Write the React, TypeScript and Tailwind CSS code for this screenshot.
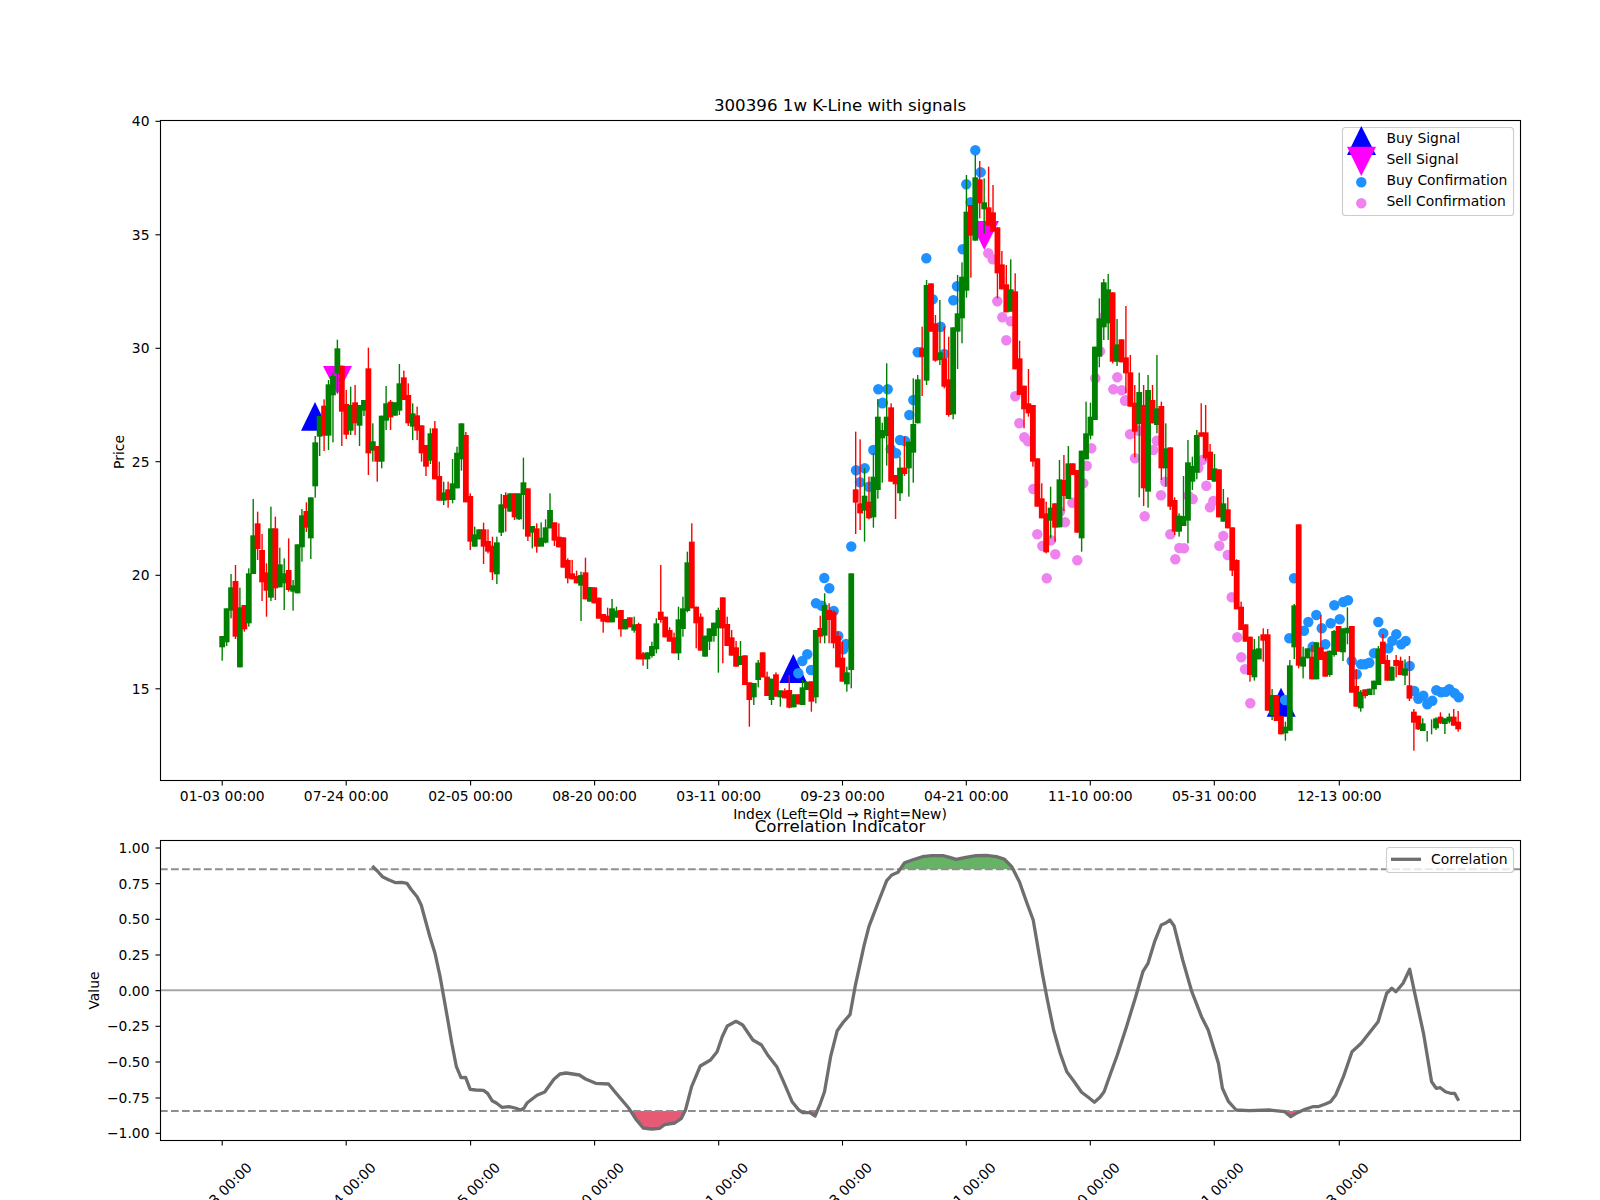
import React from "react";

type C = [string, number, number, number, number];

const X0 = 222.2;
const STEP = 4.43;

// Candles are read per crop: y = y0 + value / 3
const seg1: C[] = [
  ["g",888,888,922,962],["g",805,805,907,918],["g",702,742,812,835],["r",675,723,890,897],["g",743,802,982,982],
  ["r",795,795,868,875],["g",685,700,850,860],["g",477,586,702,702],["r",515,550,627,660],["r",582,630,727,783],
  ["r",670,697,752,830],["g",500,565,773,783],["r",530,565,745,780],["g",623,673,742,742],["g",655,700,730,810],
  ["r",595,690,750,755],["g",720,736,755,812],["g",613,613,760,760],["g",507,526,622,665],["r",487,513,563,576],
  ["g",472,472,595,657],["g",288,307,439,473],["g",228,228,290,348],["r",178,197,287,333],["g",120,133,287,330],
  ["g",100,108,166,307],["g",-1,25,100,160],["r",77,77,215,318],["r",150,192,284,297],["g",140,195,272,285],
  ["r",135,187,250,285],["g",195,195,257,318],["g",180,180,212,228],["r",23,85,340,405],["g",250,304,332,365],
  ["r",318,318,365,425],["g",227,227,365,385],["g",138,190,242,270],["r",180,185,232,270],["g",187,187,227,227],
  ["g",72,130,212,225],["r",92,112,180,180],["r",130,165,250,258],["g",190,220,260,300],["r",200,226,272,300],
  ["r",256,256,340,365],["r",315,315,380,408],["g",265,280,362,372],["r",243,265,418,418],["r",365,408,482,482],
  ["g",425,457,482,495],["r",425,448,480,503],["g",357,430,480,490],["g",320,338,445,445],["g",250,250,358,392],
  ["r",276,285,487,487],["r",460,468,605,630],["g",560,583,620,620],["g",568,568,598,598],["r",548,568,620,672],
  ["r",568,603,635,640],["r",590,617,697,720],["g",590,607,703,732],["g",462,493,578,588],["r",457,465,505,575],
  ["g",460,460,515,515],["r",460,460,532,540],["g",460,460,538,540],["g",353,427,465,568],["r",445,445,590,603],
];
const seg2: C[] = [
  ["g",258,258,278,325],["r",250,265,320,338],["g",247,293,320,318],["g",238,262,308,310],["g",160,210,265,265],
  ["r",247,247,302,318],["r",250,290,322,322],["r",292,292,383,383],["r",355,360,415,430],["r",360,400,418,418],
  ["r",392,408,430,430],["g",395,405,437,543],["r",353,397,478,478],["g",441,441,485,485],["r",442,442,490,490],
  ["r",473,473,536,536],["r",522,522,545,578],["r",503,527,547,547],["g",477,505,547,547],["g",500,512,533,533],
  ["r",510,510,568,590],["g",537,537,568,568],["r",532,532,562,562],["g",530,553,572,578],["r",548,552,658,658],
  ["r",636,640,658,677],["g",637,637,658,687],["g",605,618,648,653],["g",535,550,628,640],["r",375,515,540,548],
  ["r",530,530,592,592],["r",562,570,605,605],["r",578,592,640,640],["g",500,538,640,660],["g",470,505,567,590],
  ["g",335,367,513,517],["r",250,305,505,505],["r",500,500,550,625],["r",520,530,632,632],["g",587,587,650,650],
  ["g",565,565,605,630],["g",548,548,588,605],["g",503,510,565,698],["r",472,472,565,670],["r",530,552,618,618],
  ["r",570,592,647,647],["r",603,622,680,680],["g",603,648,675,675],["r",646,646,735,735],["r",727,727,780,860],
  ["g",729,729,772,795],["g",660,668,720,742],["r",637,637,712,712],["r",695,710,768,768],["g",716,716,780,795],
  ["r",697,703,770,770],["g",751,751,772,800],["r",745,752,775,775],["r",705,750,803,805],["g",763,763,802,802],
  ["r",763,763,793,793],["g",720,742,795,795],["g",725,725,750,750],["r",724,724,785,815],["g",570,570,772,790],
  ["r",527,564,590,610],["g",460,495,587,610],["r",490,510,540,610],["r",510,515,610,625],["r",575,588,682,682],
  ["r",605,653,725,725],["g",680,697,733,755],["g",400,400,690,745],
];
// all in the crop whose y0 is 400
const seg3: C[] = [
  ["r",95,268,308,402],["r",118,310,340,390],["g",205,287,332,425],["r",230,305,355,358],["g",160,230,352,383],
  ["g",-3,50,270,296],["g",68,90,115,248],["g",-110,50,108,197],["r",10,22,245,245],["r",225,225,253,357],
  ["g",170,203,280,303],["r",110,203,222,228],["g",125,125,205,290],["g",-65,72,158,248],["g",-75,-62,70,70],
  ["r",-220,-155,-130,-12],["g",-360,-345,-58,-45],["r",-350,-350,-205,-205],["r",-255,-230,-118,-115],["g",-300,-143,-120,-105],
  ["r",-220,-125,-40,-35],["r",-190,-62,45,50],["g",-218,-218,43,58],["g",-375,-260,-205,-93],["g",-413,-370,-245,-170],
  ["g",-675,-565,-328,-307],["r",-585,-585,-493,-367],["g",-735,-668,-478,-478],["r",-717,-662,-590,-545],["g",-665,-593,-572,-500],
  ["r",-700,-578,-523,-523],["r",-645,-563,-505,-505],["r",-518,-518,-380,-305],["r",-447,-407,-332,-332],["r",-405,-347,-263,-263],
  ["g",-422,-332,-265,-265],["r",-380,-326,-92,-92],["r",-178,-125,-15,-15],["r",-43,-43,28,85],["r",-93,10,40,50],["r",15,15,185,200],
  ["r",175,175,320,320],["r",250,295,355,355],["r",305,340,457,460],["g",260,323,362,415],["r",310,310,383,425],
  ["g",180,238,382,382],["r",165,240,288,333],["g",138,190,297,297],["r",190,190,225,225],["r",210,210,398,398],
  ["g",152,152,415,455],["g",5,100,178,178],["g",8,50,107,118],["g",-160,-160,60,60],["g",-305,-245,-130,-98],
  ["g",-363,-353,-218,-180],["g",-378,-332,-230,-180],["r",-323,-323,-115,-110],["g",-243,-167,-115,-102],["r",-182,-182,-113,-113],
  ["r",-282,-128,-80,-20],["r",-135,-83,20,20],["r",-45,8,95,172],["g",-82,-24,72,292],["r",-45,15,265,318],
  ["g",-75,-30,275,323],["r",-45,0,70,70],["g",-135,25,75,100],["r",5,18,205,240],["g",70,145,205,260],
  ["r",142,142,320,330],["r",292,300,395,405],["g",340,347,395,410],["g",228,348,378,378],["g",120,187,362,430],
  ["g",170,198,245,270],["g",90,105,218,238],["r",10,97,110,110],["r",15,97,175,182],["r",132,155,240,240],
  ["g",162,205,245,245],["r",208,208,352,352],["g",267,310,365,365],["r",292,328,385,385],["r",382,382,512,528],
  ["r",478,480,628,628],["r",605,620,690,690],["r",673,673,725,725],["r",710,710,825,845],["g",717,748,832,842],
  ["g",708,745,778,778],["r",685,703,722,785],["r",687,703,932,932],["g",867,885,945,960],["r",885,885,963,963],
  ["r",948,948,1003,1003],["g",965,980,1000,1022],["g",780,796,992,992],["g",612,616,742,777],["r",373,373,797,805],
  ["g",740,770,800,835],["g",745,745,775,775],["r",735,770,838,838],["g",727,727,838,838],["r",645,742,780,780],
  ["r",755,755,830,830],["g",752,752,825,830],["g",690,693,765,770],["r",678,678,755,755],["g",685,685,757,783],
  ["g",622,683,700,733],["r",678,678,878,878],["r",808,858,920,920],["g",870,875,925,935],["r",868,868,888,895],
  ["g",866,866,885,885],["g",842,842,868,885],["g",738,745,855,855],["r",702,725,792,792],["r",765,780,842,842],
  ["g",800,800,842,842],["r",765,780,798,832],["r",770,782,825,825],["g",778,805,827,855],["r",768,856,896,903],
  ["r",927,935,968,1052],["r",947,947,988,990],["g",955,970,993,993],["g",993,1000,1000,1025],["g",958,980,980,1003],
  ["g",952,955,985,990],["r",937,950,970,972],["g",955,955,972,1002],["g",940,950,965,970],["r",927,950,977,977],
  ["r",933,965,988,995],
];

const toPx = (y0: number, list: C[]) =>
  list.map(([c, h, t, b, l]) => ({
    c: c === "g" ? "#008000" : "#ff0000",
    h: y0 + h / 3,
    t: y0 + t / 3,
    b: y0 + b / 3,
    l: y0 + l / 3,
  }));

const candles = [...toPx(340, seg1), ...toPx(440, seg2), ...toPx(400, seg3)];

const blue: number[][] = [
  [851.3,546.5],[824.3,578],[829.3,588.3],[816,603.3],[821.7,605.7],[833.7,611],[838.3,636],[846,644],[843.3,649.3],
  [807.3,654.3],[802.3,661],[798.3,673.3],[811,670],[856,470.3],[864.7,468.3],[860,482.3],[869,486.7],[873.3,450],
  [896,453.3],[890.7,449],[900,440],[905,441],[909.3,415],[913.3,400],[882.7,402.7],[878.3,389.3],[887.7,389.3],
  [882.3,403.3],[917.7,352.3],[921,352.3],[944.3,354],[932.7,299.3],[940.7,326.7],[926.3,258.3],[953.3,300.3],
  [957,286.3],[962.7,249.3],[966.3,184.3],[970.7,202.3],[975.3,150.3],[980.7,172.3],[1285,700],[1294,578.3],
  [1289.3,638.3],[1304,630.7],[1308.3,622],[1316.3,615],[1321.7,628.3],[1334.3,605.3],[1330.7,623.3],[1339.7,619.3],
  [1343.3,602],[1348,600.3],[1312.7,646.7],[1325.3,644.3],[1351.7,661],[1356.7,674.3],[1361,664.3],[1365,664.3],
  [1369.3,662.7],[1374,653.3],[1378.3,622],[1383.3,633.3],[1388.3,648.3],[1392.3,640.7],[1396.3,634.3],[1401.3,644.3],
  [1405.7,641],[1409.7,666],[1414.3,691],[1418.3,698.7],[1423.3,695.7],[1427.3,704.3],[1432.3,700.7],[1436.3,690.3],
  [1441,692.3],[1445.7,691.7],[1449.3,689.3],[1454.7,693.3],[1458.7,697.3],
];

const violet: number[][] = [
  [988.3,253.3],[992.7,259.3],[997.3,301.3],[1002.3,317.3],[1010.7,321.3],[1006.3,340.3],[1015.3,396.3],[1019.3,423.3],
  [1100,351.3],[1095.3,378.3],[1117.3,377.3],[1113.3,389.3],[1121.7,390.3],[1126,400.3],[1104,316.7],[1024.3,437.3],
  [1028,441.3],[1033.3,489],[1037.3,534.3],[1042.3,546],[1051,540.3],[1055.3,554.3],[1046.7,578.3],[1065,522.3],
  [1060,511.7],[1072.3,502.7],[1077.3,560.3],[1083.3,483.3],[1086.7,465.7],[1091.3,448.3],[1130,434.3],[1135,458.3],
  [1125,400.7],[1139,430.7],[1153.3,450],[1156.7,440.7],[1165.3,481.7],[1144.7,516.3],[1161,495.3],[1170.3,534.3],
  [1179.3,548],[1184,548.3],[1175.3,559.3],[1188.3,495.7],[1192.7,499],[1202.3,460],[1198.3,468],[1206.3,485.7],
  [1210,507.3],[1213.3,501],[1223.3,536],[1219.3,545.7],[1227.7,555],[1231.7,597.3],[1237.3,637.3],[1241.3,657.3],
  [1245,669.3],[1250.3,703.3],
];

const corrA: number[][] = [
  [612,318],[622,333],[632,350],[645,360],[658,368],[670,367],[680,370],[688,388],[700,410],[708,435],[716,480],[725,530],
  [735,580],[745,650],[752,710],[760,780],[768,850],[777,920],[786,953],[795,952],[804,988],[815,990],[830,991],[838,1000],
  [847,1022],[856,1030],[866,1042],[880,1040],[892,1044],[903,1050],[909,1045],[916,1028],[935,1006],[950,996],[968,958],
  [980,942],[992,939],[1018,945],[1030,957],[1050,970],[1075,972],[1090,1000],[1115,1045],[1130,1080],[1143,1104],[1160,1107],
  [1175,1105],[1185,1094],[1205,1089],[1218,1075],[1226,1050],[1238,980],[1255,918],[1275,900],[1288,875],[1298,830],[1308,798],
  [1325,784],[1338,795],[1358,840],[1375,855],[1387,885],[1405,920],[1418,965],[1435,1025],[1448,1050],[1456,1058],[1470,1058],
];
const corrB: number[][] = [
  [29.6,1068],[40,1030],[48,995],[60,890],[73,812],[84,788],[98,764],[108,680],[125,560],[135,500],[155,420],[170,362],[180,345],
  [192,337],[205,308],[220,300],[240,290],[258,287],[280,287],[295,293],[306,298],[325,292],[345,287],[365,286],[385,290],[400,297],
  [415,320],[430,365],[445,430],[457,480],[465,550],[475,640],[485,720],[497,810],[510,880],[523,935],[535,960],[552,997],[565,1012],
  [577,1027],[588,1012],[596,995],[610,935],[622,885],[640,800],[658,710],[672,635],[682,610],[695,545],[708,495],[716,490],[725,480],
  [733,497],[750,600],[768,695],[787,770],[800,810],[820,910],[828,985],[840,1025],[855,1050],[880,1052],[920,1050],[950,1055],
  [962,1070],[975,1058],[990,1048],[1005,1040],[1015,1040],[1030,1032],[1040,1025],[1050,1005],[1065,950],[1082,875],[1100,850],
  [1133,785],[1150,700],[1160,685],[1168,695],[1182,670],[1195,628],[1205,700],[1222,820],[1238,965],[1247,985],[1255,983],[1265,995],
  [1275,1000],[1283,1000],[1291,1022],
];
const corr = [
  ...corrA.map(([x, y]) => [60 + x / 1.96, 760 + y / 3]),
  ...corrB.map(([x, y]) => [800 + x / 1.96, 760 + y / 3]),
];
const corrLine = corr.map((p) => `${p[0].toFixed(1)},${p[1].toFixed(1)}`).join(" ");
const fillShape = (y: number) =>
  `${corr[0][0].toFixed(1)},${y} ${corrLine} ${corr[corr.length - 1][0].toFixed(1)},${y}`;

const ticks: [number, string][] = [
  [222.2, "01-03 00:00"],[346.2, "07-24 00:00"],[470.6, "02-05 00:00"],[594.6, "08-20 00:00"],[718.7, "03-11 00:00"],
  [842.5, "09-23 00:00"],[966.3, "04-21 00:00"],[1090.3, "11-10 00:00"],[1214.3, "05-31 00:00"],[1339.3, "12-13 00:00"],
];
const priceTicks: [number, string][] = [
  [121.3, "40"],[234.8, "35"],[348.3, "30"],[461.7, "25"],[575.3, "20"],[688.8, "15"],
];
const valueTicks: [number, string][] = [
  [848, "1.00"],[883.7, "0.75"],[919.3, "0.50"],[955, "0.25"],[990.7, "0.00"],[1026.3, "−0.25"],[1062, "−0.50"],[1098, "−0.75"],[1133.3, "−1.00"],
];

export default function App() {
  return (
    <div className="relative flex h-[1200px] w-[1600px] flex-col overflow-hidden bg-white font-['DejaVu_Sans',sans-serif] text-black">
      <div className="ml-[160px] h-[116px] w-[1360px] pt-[96px] text-center text-[16.67px] leading-[20px]">
        300396 1w K-Line with signals
      </div>

      <svg className="block h-[688px] w-[1600px] shrink-0 text-[13.89px]" viewBox="0 116 1600 688">
        {/* signals */}
        <polygon points="315,402 301,430.7 329,430.7" fill="#0000ff" />
        <polygon points="323,366 352,366 337.5,394.3" fill="#ff00ff" />
        <polygon points="793.3,654 779.3,683 807.3,683" fill="#0000ff" />
        <polygon points="970,221 999,221 984.3,250" fill="#ff00ff" />
        <polygon points="1281,687.7 1266.7,716.7 1295.7,716.7" fill="#0000ff" />
        {/* confirmations */}
        {blue.map(([x, y], i) => (
          <circle key={`b${i}`} cx={x} cy={y} r={5.2} fill="#1e90ff" />
        ))}
        {violet.map(([x, y], i) => (
          <circle key={`v${i}`} cx={x} cy={y} r={5.2} fill="#ee82ee" />
        ))}
        {/* candles */}
        {candles.map((k, i) => {
          const x = X0 + i * STEP;
          return (
            <g key={i} fill={k.c}>
              <rect x={x - 0.7} y={k.h} width={1.4} height={Math.max(0, k.l - k.h)} />
              {k.b > k.t && <rect x={x - 2.9} y={k.t} width={5.8} height={k.b - k.t} />}
            </g>
          );
        })}
        {/* frame and ticks */}
        <rect x={160.5} y={120.5} width={1360} height={660} fill="none" stroke="#000" strokeWidth={1.1} />
        {ticks.map(([x, label]) => (
          <g key={label}>
            <line x1={x} x2={x} y1={781} y2={785.5} stroke="#000" strokeWidth={1.1} />
            <text x={x} y={800.7} textAnchor="middle">{label}</text>
          </g>
        ))}
        {priceTicks.map(([y, label]) => (
          <g key={label}>
            <line x1={155.5} x2={160} y1={y} y2={y} stroke="#000" strokeWidth={1.1} />
            <text x={149.5} y={y + 5.1} textAnchor="end">{label}</text>
          </g>
        ))}
        <text transform="translate(124 452) rotate(-90)" textAnchor="middle">Price</text>
        {/* legend */}
        <rect x={1342.5} y={127.5} width={171} height={88} rx={3} fill="#fff" fillOpacity={0.8} stroke="#cccccc" strokeWidth={1.1} />
        <polygon points="1361.3,126 1347,155 1376,155" fill="#0000ff" />
        <polygon points="1347,146.7 1376,146.7 1361.3,176" fill="#ff00ff" />
        <circle cx={1361.3} cy={182.3} r={5.2} fill="#1e90ff" />
        <circle cx={1361.3} cy={203.3} r={5.2} fill="#ee82ee" />
        <text x={1386.5} y={143.3}>Buy Signal</text>
        <text x={1386.5} y={164.3}>Sell Signal</text>
        <text x={1386.5} y={185.3}>Buy Confirmation</text>
        <text x={1386.5} y={206.3}>Sell Confirmation</text>
      </svg>

      <div className="ml-[160px] h-[20px] w-[1360px] text-center text-[13.89px] leading-[20px]">
        Index (Left=Old → Right=New)
      </div>
      <div className="-mt-[7px] ml-[160px] h-[20px] w-[1360px] text-center text-[16.67px] leading-[20px]">
        Correlation Indicator
      </div>

      <svg className="block h-[363px] w-[1600px] shrink-0 text-[13.89px]" viewBox="0 837 1600 363">
        <defs>
          <clipPath id="below">
            <rect x={160} y={1111} width={1360} height={29} />
          </clipPath>
          <clipPath id="above">
            <rect x={160} y={840} width={1360} height={29.4} />
          </clipPath>
        </defs>
        <polygon points={fillShape(1111)} fill="#dc143c" fillOpacity={0.7} clipPath="url(#below)" />
        <polygon points={fillShape(869.4)} fill="#008000" fillOpacity={0.6} clipPath="url(#above)" />
        <line x1={160} x2={1520} y1={990.2} y2={990.2} stroke="#a6a6a6" strokeWidth={2} />
        <line x1={160} x2={1520} y1={869.2} y2={869.2} stroke="#8f8f8f" strokeWidth={2.1} strokeDasharray="7.7 3.3" />
        <line x1={160} x2={1520} y1={1111} y2={1111} stroke="#8f8f8f" strokeWidth={2.1} strokeDasharray="7.7 3.3" />
        <polyline points={corrLine} fill="none" stroke="#6e6e6e" strokeWidth={3.3} strokeLinejoin="round" />
        <rect x={160.5} y={840.5} width={1360} height={300} fill="none" stroke="#000" strokeWidth={1.1} />
        {ticks.map(([x, label]) => (
          <g key={label}>
            <line x1={x} x2={x} y1={1141} y2={1145.5} stroke="#000" strokeWidth={1.1} />
            <text transform={`translate(${x - 3} 1195) rotate(-45)`} y={5} textAnchor="middle">{label}</text>
          </g>
        ))}
        {valueTicks.map(([y, label]) => (
          <g key={label}>
            <line x1={155.5} x2={160} y1={y} y2={y} stroke="#000" strokeWidth={1.1} />
            <text x={149.5} y={y + 5.1} textAnchor="end">{label}</text>
          </g>
        ))}
        <text transform="translate(99 990.5) rotate(-90)" textAnchor="middle">Value</text>
        {/* legend */}
        <rect x={1386.5} y={847.5} width={127} height={25} rx={3} fill="#fff" fillOpacity={0.8} stroke="#cccccc" strokeWidth={1.1} />
        <line x1={1391} x2={1421} y1={859.3} y2={859.3} stroke="#6e6e6e" strokeWidth={3.3} />
        <text x={1431} y={864}>Correlation</text>
      </svg>
    </div>
  );
}
